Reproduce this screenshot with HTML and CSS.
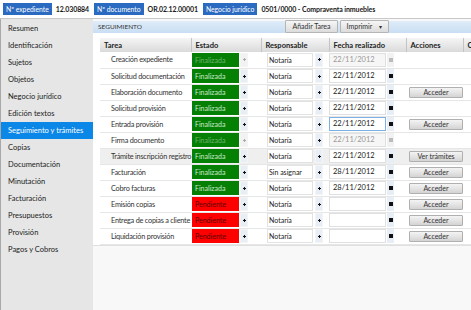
FILE: index.html
```html
<!DOCTYPE html>
<html lang="es">
<head>
<meta charset="utf-8">
<title>Seguimiento</title>
<link rel="stylesheet" href="styles.css">
</head>
<body>
<div class="topbar">
  <span class="badge">Nº expediente</span><span class="val">12.030884</span>
  <span class="badge">Nº documento</span><span class="val">OR.02.12.00001</span>
  <span class="badge">Negocio jurídico</span><span class="val">0501/0000 - Compraventa inmuebles</span>
</div>
<div class="layout">
  <nav class="sidebar">
    <div class="nav-item">Resumen</div>
    <div class="nav-item">Identificación</div>
    <div class="nav-item">Sujetos</div>
    <div class="nav-item">Objetos</div>
    <div class="nav-item">Negocio jurídico</div>
    <div class="nav-item">Edición textos</div>
    <div class="nav-item active">Seguimiento y trámites</div>
    <div class="nav-item">Copias</div>
    <div class="nav-item">Documentación</div>
    <div class="nav-item">Minutación</div>
    <div class="nav-item">Facturación</div>
    <div class="nav-item">Presupuestos</div>
    <div class="nav-item">Provisión</div>
    <div class="nav-item">Pagos y Cobros</div>
  </nav>
  <main class="main">
    <div class="panel-head">
      <span class="panel-title">SEGUIMIENTO</span>
      <div class="tools">
        <button class="tbtn">Añadir Tarea</button>
        <button class="tbtn">Imprimir <span class="caret">▾</span></button>
      </div>
    </div>
    <div class="content">
      <table class="grid">
        <colgroup>
          <col class="c-tarea"><col class="c-estado"><col class="c-resp"><col class="c-fecha"><col class="c-acc"><col class="c-extra">
        </colgroup>
        <thead>
          <tr><th>Tarea</th><th>Estado</th><th>Responsable</th><th>Fecha realizado</th><th>Acciones</th><th>C</th></tr>
        </thead>
        <tbody>
          <tr>
            <td class="task">Creación expediente</td>
            <td><div class="sel"><span class="state ok off">Finalizada</span><span class="arr off"></span></div></td>
            <td><div class="sel"><span class="box">Notaría</span><span class="arr"></span></div></td>
            <td><div class="sel"><span class="date off">22/11/2012</span><span class="cal off"></span></div></td>
            <td></td><td></td>
          </tr>
          <tr>
            <td class="task">Solicitud documentación</td>
            <td><div class="sel"><span class="state ok">Finalizada</span><span class="arr"></span></div></td>
            <td><div class="sel"><span class="box">Notaría</span><span class="arr"></span></div></td>
            <td><div class="sel"><span class="date">22/11/2012</span><span class="cal"></span></div></td>
            <td></td><td></td>
          </tr>
          <tr>
            <td class="task">Elaboración documento</td>
            <td><div class="sel"><span class="state ok">Finalizada</span><span class="arr"></span></div></td>
            <td><div class="sel"><span class="box">Notaría</span><span class="arr"></span></div></td>
            <td><div class="sel"><span class="date">22/11/2012</span><span class="cal"></span></div></td>
            <td><button class="act">Acceder</button></td><td></td>
          </tr>
          <tr>
            <td class="task">Solicitud provisión</td>
            <td><div class="sel"><span class="state ok">Finalizada</span><span class="arr"></span></div></td>
            <td><div class="sel"><span class="box">Notaría</span><span class="arr"></span></div></td>
            <td><div class="sel"><span class="date">22/11/2012</span><span class="cal"></span></div></td>
            <td></td><td></td>
          </tr>
          <tr>
            <td class="task">Entrada provisión</td>
            <td><div class="sel"><span class="state ok">Finalizada</span><span class="arr"></span></div></td>
            <td><div class="sel"><span class="box">Notaría</span><span class="arr"></span></div></td>
            <td><div class="sel"><span class="date focus">22/11/2012</span><span class="cal"></span></div></td>
            <td><button class="act">Acceder</button></td><td></td>
          </tr>
          <tr>
            <td class="task">Firma documento</td>
            <td><div class="sel"><span class="state ok off">Finalizada</span><span class="arr off"></span></div></td>
            <td><div class="sel"><span class="box">Notaría</span><span class="arr"></span></div></td>
            <td><div class="sel"><span class="date off">22/11/2012</span><span class="cal off"></span></div></td>
            <td></td><td></td>
          </tr>
          <tr class="hover">
            <td class="task">Trámite inscripción registro</td>
            <td><div class="sel"><span class="state ok">Finalizada</span><span class="arr"></span></div></td>
            <td><div class="sel"><span class="box">Notaría</span><span class="arr"></span></div></td>
            <td><div class="sel"><span class="date">22/11/2012</span><span class="cal"></span></div></td>
            <td><button class="act">Ver trámites</button></td><td></td>
          </tr>
          <tr>
            <td class="task">Facturación</td>
            <td><div class="sel"><span class="state ok">Finalizada</span><span class="arr"></span></div></td>
            <td><div class="sel"><span class="box">Sin asignar</span><span class="arr"></span></div></td>
            <td><div class="sel"><span class="date">28/11/2012</span><span class="cal"></span></div></td>
            <td><button class="act">Acceder</button></td><td></td>
          </tr>
          <tr>
            <td class="task">Cobro facturas</td>
            <td><div class="sel"><span class="state ok">Finalizada</span><span class="arr"></span></div></td>
            <td><div class="sel"><span class="box">Notaría</span><span class="arr"></span></div></td>
            <td><div class="sel"><span class="date">28/11/2012</span><span class="cal"></span></div></td>
            <td><button class="act">Acceder</button></td><td></td>
          </tr>
          <tr>
            <td class="task">Emisión copias</td>
            <td><div class="sel"><span class="state pend">Pendiente</span><span class="arr"></span></div></td>
            <td><div class="sel"><span class="box">Notaría</span><span class="arr"></span></div></td>
            <td><div class="sel"><span class="date"></span><span class="cal"></span></div></td>
            <td><button class="act">Acceder</button></td><td></td>
          </tr>
          <tr>
            <td class="task">Entrega de copias a cliente</td>
            <td><div class="sel"><span class="state pend">Pendiente</span><span class="arr"></span></div></td>
            <td><div class="sel"><span class="box">Notaría</span><span class="arr"></span></div></td>
            <td><div class="sel"><span class="date"></span><span class="cal"></span></div></td>
            <td><button class="act">Acceder</button></td><td></td>
          </tr>
          <tr>
            <td class="task">Liquidación provisión</td>
            <td><div class="sel"><span class="state pend">Pendiente</span><span class="arr"></span></div></td>
            <td><div class="sel"><span class="box">Notaría</span><span class="arr"></span></div></td>
            <td><div class="sel"><span class="date"></span><span class="cal"></span></div></td>
            <td><button class="act">Acceder</button></td><td></td>
          </tr>
        </tbody>
      </table>
    </div>
  </main>
</div>
</body>
</html>
```
FILE: styles.css
```css
* { box-sizing: border-box; }
html, body {
  margin: 0;
  padding: 0;
  width: 471px;
  height: 310px;
  overflow: hidden;
  background: #fff;
  font-family: Lato, "Noto Sans", sans-serif;
  font-size: 7.5px;
  color: #222;
}
.topbar {
  height: 19px;
  display: flex;
  align-items: center;
  padding-left: 3px;
  border-bottom: 1px solid #c8c8c8;
  background: #fff;
}
.badge {
  background: #2a6ac0;
  color: #fff;
  height: 12px;
  line-height: 12px;
  padding: 0 3px;
  font-size: 6.8px;
  margin-right: 4px;
}
.val {
  font-weight: bold;
  font-size: 7px;
  letter-spacing: -0.1px;
  color: #1a1a1a;
  margin-right: 5px;
}
.layout {
  display: flex;
  height: 291px;
}
.sidebar {
  width: 93px;
  flex: none;
  background: #e6e6e6;
  border-left: 1px solid #a8a8a8;
  padding-top: 1px;
}
.nav-item {
  height: 17px;
  line-height: 17px;
  padding-left: 7px;
  color: #222;
  white-space: nowrap;
}
.nav-item.active {
  background: #0b87e8;
  color: #fff;
}
.main {
  flex: 1;
  min-width: 0;
  background: #f8f8f8;
  overflow: hidden;
}
.panel-head {
  height: 14px;
  display: flex;
  align-items: flex-end;
  background: linear-gradient(#dfecf8, #c9def3) 0 2px / 100% 12px no-repeat;
}
.panel-title {
  height: 12px;
  line-height: 12px;
  padding-left: 5px;
  font-size: 6.5px;
  color: #333;
  flex: 1;
}
.tools {
  display: flex;
  gap: 2px;
  margin-right: 82px;
}
.tbtn {
  height: 13px;
  font: inherit;
  font-size: 7px;
  color: #333;
  padding: 0 6px;
  border: 1px solid #b5b5b5;
  background: linear-gradient(#f6f6f6, #dcdcdc);
  border-radius: 1px;
  line-height: 11px;
}
.caret { font-size: 6px; margin-left: 5px; }
.content {
  background: #fff;
  padding: 5px 0 0 7px;
  border-bottom: 1px solid #e0e0e0;
}
.grid {
  border-collapse: collapse;
  table-layout: fixed;
  width: 420px;
}
.c-tarea { width: 91px; }
.c-estado { width: 70px; }
.c-resp { width: 68px; }
.c-fecha { width: 77px; }
.c-acc { width: 57px; }
.c-extra { width: 57px; }
.grid th {
  height: 14px;
  text-align: left;
  font-weight: bold;
  padding: 0 0 0 4px;
  background: linear-gradient(#f5f5f5, #dadada);
  border-right: 1px solid #c4c4c4;
  color: #222;
  white-space: nowrap;
}
.grid td {
  height: 16px;
  padding: 0;
  border-bottom: 1px solid #e6e6e6;
  white-space: nowrap;
  overflow: hidden;
}
.grid tr.hover td { background: #efefef; }
.grid td.task {
  padding-left: 11px;
  color: #333;
  font-size: 7.3px;
  letter-spacing: -0.22px;
  overflow: visible;
}
.sel {
  display: flex;
  align-items: center;
  gap: 1px;
  height: 14px;
}
.state {
  width: 47px;
  height: 14px;
  line-height: 14px;
  padding-left: 3px;
  margin-left: 1px;
  font-size: 7px;
}
.state.ok { background: #058005; color: #cfe8cf; }
.state.ok.off { color: #6fb36f; }
.state.pend { background: #ff0000; color: #5a0000; }
.arr {
  width: 8px;
  height: 14px;
  background: #e8eef6 radial-gradient(circle, #111 0 1px, transparent 1.2px) center / 3px 3px no-repeat;
  border: 1px solid #f4f4f4;
}
.arr.off { background: #f2f2f2 radial-gradient(circle, #aaa 0 1px, transparent 1.2px) center / 3px 3px no-repeat; }
.grid td:nth-child(3) .sel { padding-left: 6px; gap: 2px; }
.box {
  width: 46px;
  height: 14px;
  line-height: 12px;
  background: #fff;
  border: 1px solid #e2e2e2;
  padding-left: 1px;
  font-size: 7px;
  color: #222;
}
.date {
  width: 57px;
  height: 14px;
  line-height: 12px;
  background: #fff;
  border: 1px solid #e0e0e0;
  padding-left: 3px;
  color: #222;
}
.date.off { background: #f6f6f6; color: #999; }
.date.focus { border-color: #7db0e6; }
.cal {
  width: 7px;
  height: 14px;
  background: #e8eef6 linear-gradient(#111, #111) center / 4px 4px no-repeat;
}
.cal.off { background: #f2f2f2 linear-gradient(#bbb, #bbb) center / 4px 4px no-repeat; }
.act {
  display: block;
  margin-left: 3px;
  width: 54px;
  height: 11px;
  padding: 0;
  font: inherit;
  font-size: 7px;
  line-height: 9px;
  color: #333;
  border: 1px solid #b0b0b0;
  border-radius: 1px;
  background: linear-gradient(#f4f4f4, #d4d4d4);
}
```
